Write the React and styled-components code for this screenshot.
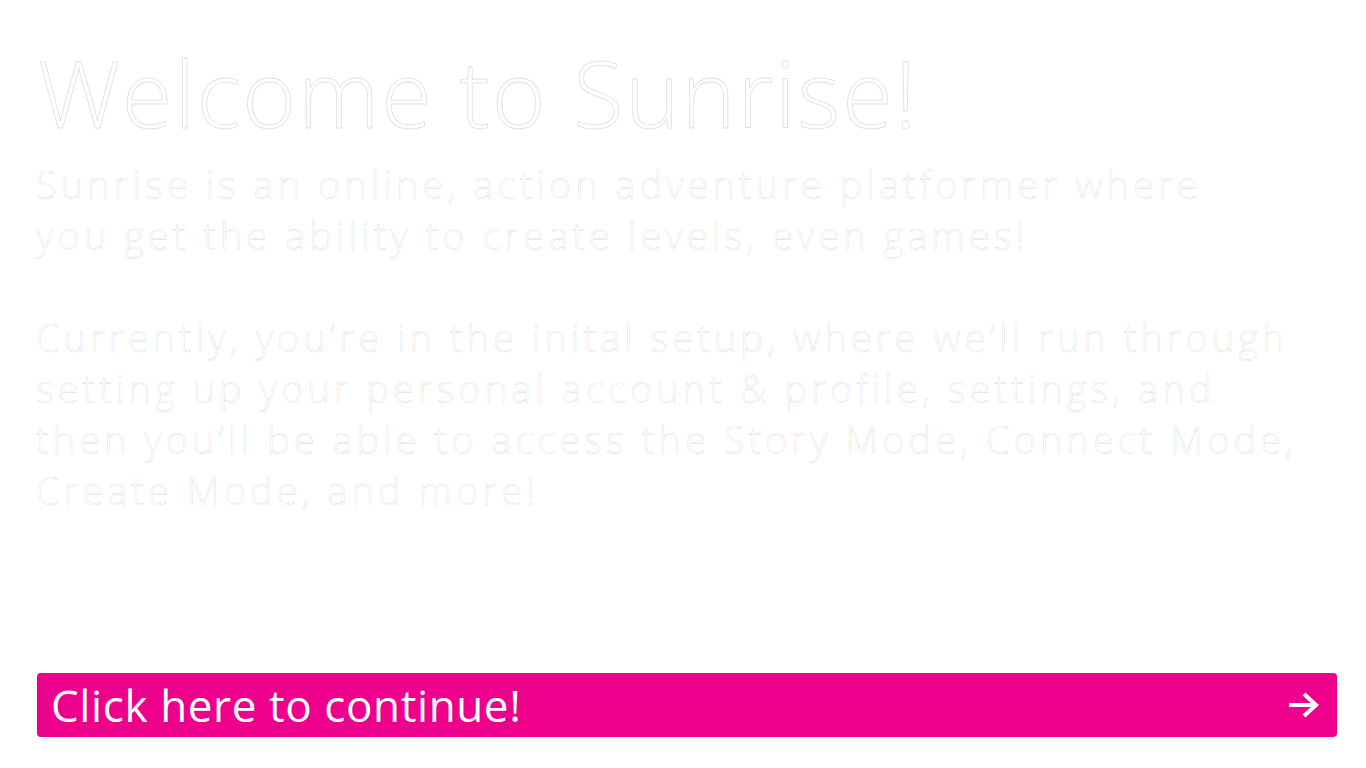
import React from "react";
import styled, { createGlobalStyle } from "styled-components";

const GlobalStyle = createGlobalStyle`
  html, body {
    margin: 0;
    background: #ffffff;
    font-family: "Open Sans", "Liberation Sans", sans-serif;
  }
`;

export default function App() {
  return (
    <>
      <GlobalStyle />
      <Page>
        <Intro>
          <Title>Welcome to Sunrise!</Title>
          <Body>
            Sunrise is an online, action adventure platformer where
            <br />
            you get the ability to create levels, even games!
          </Body>
          <Body>
            Currently, you’re in the inital setup, where we’ll run through
            <br />
            setting up your personal account &amp; profile, settings, and
            <br />
            then you’ll be able to access the Story Mode, Connect Mode,
            <br />
            Create Mode, and more!
          </Body>
        </Intro>
        <ContinueButton>
          <span>Click here to continue!</span>
          <svg width="34" height="26" viewBox="0 0 34 26">
            <path d="M2 13 H28 M17 2 L29 13 L17 24" fill="none" stroke="#fff" strokeWidth="4" strokeLinejoin="miter" />
          </svg>
        </ContinueButton>
      </Page>
    </>
  );
}

const Page = styled.div`
  height: 768px;
  box-sizing: border-box;
  padding: 38px 29px 31px 37px;
  display: flex;
  flex-direction: column;
  justify-content: space-between;
`;

const Intro = styled.div`
  display: flex;
  flex-direction: column;
`;

const Title = styled.h1`
  margin: 0 0 11px 1px;
  font-size: 92px;
  font-weight: 300;
  line-height: 110px;
  letter-spacing: 1.8px;
  color: #ffffff;
  -webkit-text-stroke: 0.8px rgba(0, 0, 0, 0.14);
`;

const Body = styled.p`
  margin: 0 0 51px -1px;
  font-size: 38px;
  font-weight: 300;
  line-height: 51px;
  letter-spacing: 4px;
  color: #ffffff;
  -webkit-text-stroke: 0.7px rgba(0, 0, 0, 0.13);
`;

const ContinueButton = styled.button`
  display: flex;
  align-items: center;
  justify-content: space-between;
  height: 64px;
  padding: 0 16px 0 14px;
  border: none;
  border-radius: 4px;
  background: #ec008c;
  color: #ffffff;
  font-family: inherit;
  font-size: 44px;
  font-weight: 400;
  letter-spacing: 0.6px;
  cursor: pointer;
  text-align: left;
`;
